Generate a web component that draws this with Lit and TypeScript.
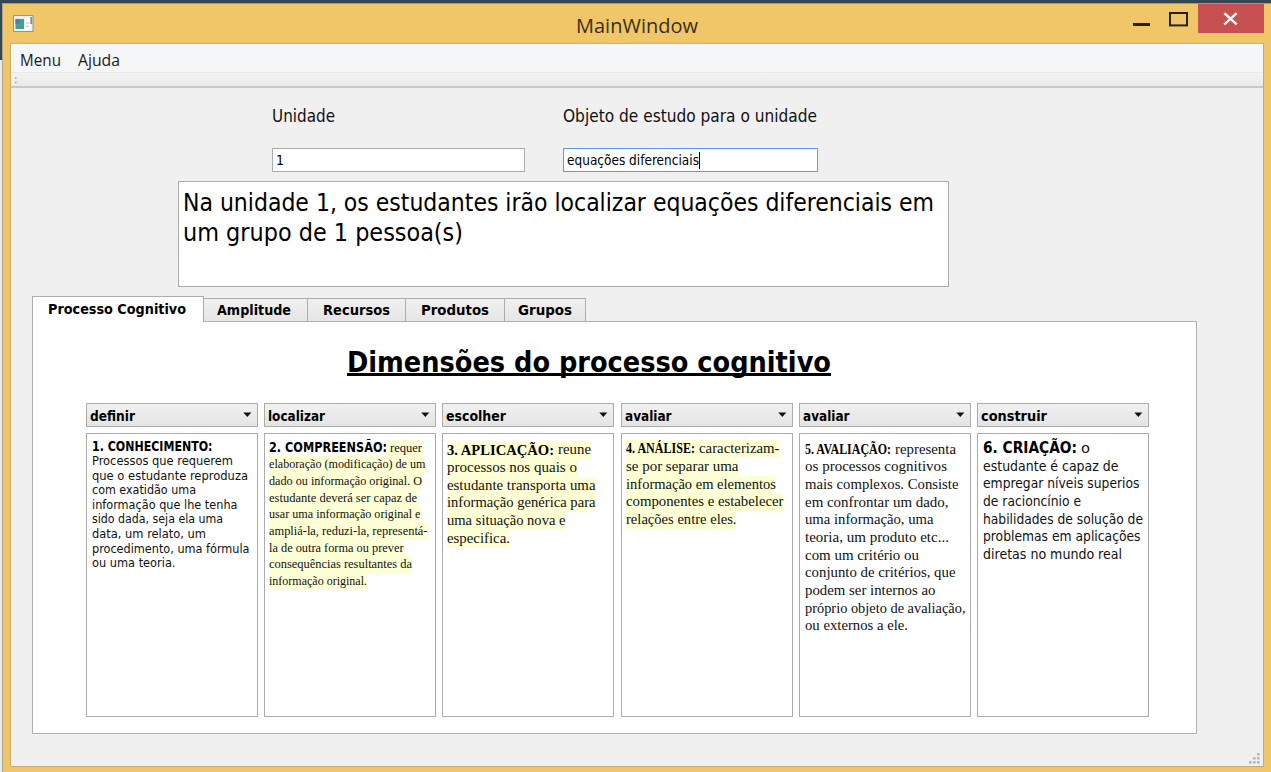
import { LitElement, html, css, svg } from "lit";
import { customElement, property, state } from "lit/decorators.js";
import { classMap } from "lit/directives/class-map.js";

type Run = { text: string; w: number; title?: boolean; plain?: boolean };
type Card = { kind: string; verb: string; lines: Run[][] };

const line = (text: string, w: number): Run[] => [{ text, w }];
const head = (text: string, w: number, plain = false): Run => ({ text, w, title: true, plain });

const CARDS: Card[] = [
  {
    kind: "c1", verb: "definir",
    lines: [
      [head("1. CONHECIMENTO:", 120.5)],
      line("Processos que requerem", 141),
      line("que o estudante reproduza", 156),
      line("com exatidão uma", 104),
      line("informação que lhe tenha", 145.5),
      line("sido dada, seja ela uma", 131),
      line("data, um relato, um", 114),
      line("procedimento, uma fórmula", 157.5),
      line("ou uma teoria.", 83.5),
    ],
  },
  {
    kind: "c2", verb: "localizar",
    lines: [
      [head("2. COMPREENSÃO:", 118, true), { text: "requer", w: 32 }],
      line("elaboração (modificação) de um", 156.5),
      line("dado ou informação original. O", 153),
      line("estudante deverá ser capaz de", 148),
      line("usar uma informação original e", 151.5),
      line("ampliá-la, reduzi-la, representá-", 158.5),
      line("la de outra forma ou prever", 134.5),
      line("consequências resultantes da", 143),
      line("informação original.", 98),
    ],
  },
  {
    kind: "c3", verb: "escolher",
    lines: [
      [head("3. APLICAÇÃO:", 107), { text: "reune", w: 33 }],
      line("processos nos quais o", 130),
      line("estudante transporta uma", 148.5),
      line("informação genérica para", 148.5),
      line("uma situação nova e", 118.5),
      line("especifica.", 63),
    ],
  },
  {
    kind: "c4", verb: "avaliar",
    lines: [
      [head("4. ANÁLISE:", 69), { text: "caracterizam-", w: 80.5 }],
      line("se por separar uma", 112.5),
      line("informação em elementos", 150),
      line("componentes e estabelecer", 157.5),
      line("relações entre eles.", 110.5),
    ],
  },
  {
    kind: "c5", verb: "avaliar",
    lines: [
      [head("5. AVALIAÇÃO:", 86), { text: "representa", w: 61 }],
      line("os processos cognitivos", 142),
      line("mais complexos. Consiste", 153.5),
      line("em confrontar um dado,", 143.5),
      line("uma informação, uma", 128.5),
      line("teoria, um produto etc...", 144),
      line("com um critério ou", 114),
      line("conjunto de critérios, que", 150.5),
      line("podem ser internos ao", 130.5),
      line("próprio objeto de avaliação,", 160.5),
      line("ou externos a ele.", 103),
    ],
  },
  {
    kind: "c6", verb: "construir",
    lines: [
      [head("6. CRIAÇÃO:", 94), { text: "o", w: 9 }],
      line("estudante é capaz de", 135.5),
      line("empregar níveis superios", 156.5),
      line("de racioncínio e", 98),
      line("habilidades de solução de", 160),
      line("problemas em aplicações", 157.5),
      line("diretas no mundo real", 139),
    ],
  },
];

const TABS = [
  { label: "Processo Cognitivo", tab: 172, w: 138 },
  { label: "Amplitude", tab: 103.5, w: 74 },
  { label: "Recursos", tab: 98, w: 67 },
  { label: "Produtos", tab: 99, w: 68 },
  { label: "Grupos", tab: 81.5, w: 54 },
];

/** One run of text, condensed or widened so that it spans exactly `w` pixels. */
@customElement("fit-text")
class FitText extends LitElement {
  @property({ type: Number }) w = 0;
  @property() text = "";
  @state() private stretch = 1;

  static styles = css`
    :host { display: inline-block; white-space: pre; }
    .run { display: inline-block; transform-origin: 0 50%; }
  `;

  firstUpdated() {
    const run = this.renderRoot.querySelector(".run") as HTMLElement;
    const natural = run.getBoundingClientRect().width;
    this.style.width = `${this.w}px`;
    this.stretch = this.w / natural;
  }

  render() {
    return html`<span class="run" style="transform:scaleX(${this.stretch})">${this.text}</span>`;
  }
}

@customElement("app-root")
class AppRoot extends LitElement {
  @state() private active = 0;

  static styles = css`
    :host {
      display: block;
      width: 1271px;
      height: 772px;
      overflow: hidden;
      color: #000;
      font-family: "DejaVu Sans Condensed", "DejaVu Sans", sans-serif;
      font-stretch: condensed;
    }
    * { box-sizing: border-box; }
    .desktop {
      height: 772px;
      padding: 3px 0 0 2px;
      background: linear-gradient(#334654 0 60px, #e9eaec 60px);
    }
    .window {
      height: 769px;
      background: #f0c669;
      border-top: 1px solid #b09a62;
      border-left: 1px solid #b5a67e;
      padding: 0 7px 5px 7px;
      display: flex;
      flex-direction: column;
    }
    .titlebar {
      height: 39px;
      flex: none;
      display: flex;
      align-items: flex-start;
      padding-left: 3px;
      font-family: "Open Sans", "Noto Sans", sans-serif;
      font-stretch: normal;
    }
    .app-icon { margin-top: 11px; display: block; }
    .title {
      flex: 1;
      padding: 7px 0 0 542px;
      font-size: 20.3px;
      line-height: 28px;
      color: #3a301a;
    }
    .controls { display: flex; }
    .client {
      flex: 1;
      display: flex;
      flex-direction: column;
      border: 1px solid #c3ab73;
      border-top-color: #cdb27a;
      background: #f0f0f0;
    }
    .menubar {
      height: 28px;
      flex: none;
      display: flex;
      gap: 17px;
      padding-left: 8px;
      background: #f5f6f8;
      border-left: 1px solid #fff;
      font-family: "Open Sans", "Noto Sans", sans-serif;
      font-stretch: normal;
      font-size: 16.4px;
      line-height: 31px;
      color: #1b1b1b;
    }
    .toolbar {
      height: 16px;
      flex: none;
      border-top: 1px solid #e9e9ea;
      border-bottom: 2px solid #c9c9c9;
      background: linear-gradient(#f2f2f3, #eaeaea);
      padding: 4px 0 0 4px;
    }
    .grip { display: block; }
    .body {
      flex: 1;
      padding: 16px 0 0 21px;
      display: flex;
      flex-direction: column;
    }
    .form {
      display: grid;
      grid-template-columns: 254px 255px;
      column-gap: 37.5px;
      row-gap: 21px;
      margin-left: 239.5px;
      font-size: 17px;
    }
    .label { line-height: 24px; height: 23px; color: #111; }
    .field {
      height: 24px;
      border: 1px solid #ababab;
      background: #fff;
      padding-left: 3px;
      font-size: 14.5px;
      line-height: 23px;
      display: flex;
    }
    .field.narrow { width: 253px; }
    .focus { border-color: #569de5; }
    .caret { width: 1px; height: 17px; margin-top: 3px; background: #000; }
    .summary {
      margin: 9px 0 0 146px;
      width: 771px;
      height: 106px;
      border: 1px solid #ababab;
      background: #fff;
      padding: 6px 0 0 4px;
      font-size: 25px;
      line-height: 30px;
    }
    .summary-line { height: 30px; }
    .tabs {
      display: flex;
      align-items: flex-end;
      margin-top: 9px;
      height: 26px;
      font-weight: bold;
      font-size: 14.8px;
    }
    .tab {
      height: 24px;
      border: 1px solid #acacac;
      border-left-width: 0;
      background: linear-gradient(#f0f0f0, #e5e5e5);
      display: flex;
      justify-content: center;
      line-height: 22px;
    }
    .tab.on {
      height: 26px;
      margin-bottom: 0;
      border-left-width: 1px;
      border-bottom: 0;
      background: #fff;
      line-height: 24px;
      padding-right: 3px;
      z-index: 1;
    }
    .tab:nth-child(2) { padding-right: 2px; }
    .panel {
      width: 1165px;
      height: 413px;
      margin-top: -1px;
      border: 1px solid #b0b0b0;
      background: #fff;
      padding: 22px 0 0 53px;
    }
    .heading {
      height: 34px;
      overflow: hidden;
      margin-left: 261px;
      font-size: 29px;
      font-weight: bold;
      line-height: 36px;
    }
    .heading-text {
      display: inline-block;
      height: 32px;
      line-height: 36px;
      border-bottom: 3px solid #000;
      overflow: visible;
    }
    .columns {
      display: grid;
      grid-template-columns: repeat(6, 172px);
      column-gap: 6.2px;
      margin-top: 25px;
    }
    .combo {
      height: 24px;
      border: 1px solid #acacac;
      background: linear-gradient(#f1f1f1, #e4e4e4);
      display: flex;
      justify-content: space-between;
      padding: 0 5px 0 3px;
      font-weight: bold;
      font-size: 14.8px;
      line-height: 23px;
    }
    .arrow { display: block; margin-top: 8px; }
    .card {
      height: 284px;
      margin-top: 6px;
      border: 1px solid #ababab;
      background: #fff;
      padding-left: 4px;
      color: #111;
    }
    .row { display: flex; width: fit-content; height: var(--pitch); line-height: var(--pitch); }
    .b { font-weight: bold; color: #000; }
    .serif { font-family: "Liberation Serif", serif; font-stretch: normal; }
    .sans { font-family: "DejaVu Sans Condensed", "DejaVu Sans", sans-serif; font-stretch: condensed; }
    .hl { background: #ffffd6; }

    .c1 { --pitch: 14.6px; font-size: 12px; padding-top: 5px; padding-left: 5px; }
    .c1 .row:first-child { height: 15px; line-height: 16px; }
    .c1 .b { font-size: 13.4px; }
    .c2 { --pitch: 16.7px; font-size: 13px; padding-top: 5.5px; }
    .c2 .b { font-size: 13.2px; }
    .c2 .b + .rest { padding-left: 3px; }
    .c3 { --pitch: 17.75px; font-size: 14.6px; padding-top: 7px; }
    .c3 .row:first-child, .c4 .row:first-child, .c5 .row:first-child, .c6 .row:first-child { column-gap: 4px; }
    .c3 .b { font-size: 15.6px; }
    .c4 { --pitch: 17.75px; font-size: 14.6px; padding-top: 6px; }
    .c4 .b { font-size: 13.6px; }
    .c5 { --pitch: 17.7px; font-size: 14.6px; padding-top: 6.5px; padding-left: 5px; }
    .c5 .b { font-size: 13.6px; }
    .c6 { --pitch: 17.7px; font-size: 14.5px; padding-top: 6px; padding-left: 5px; }
    .c6 .b { font-size: 15px; }
    .statusbar {
      flex: 1;
      display: flex;
      justify-content: flex-end;
      align-items: flex-end;
      padding: 0 3px 2px 0;
    }
  `;

  private renderCard(card: Card) {
    const serif = ["c2", "c3", "c4", "c5"].includes(card.kind);
    const marked = ["c2", "c3", "c4"].includes(card.kind);
    return html`
      <div class="column">
        <div class="combo">
          <span>${this.verb(card.verb)}</span>
          <svg class="arrow" width="9" height="6" viewBox="0 0 9 6"><path d="M0.3 0.5H8.3L4.3 5Z" fill="#111" /></svg>
        </div>
        <div class="card ${card.kind}">
          ${card.lines.map((runs) => {
            const split = runs.some((r) => r.plain);
            return html`<div class=${classMap({ row: true, serif, hl: marked && !split })}>
              ${runs.map((r) => html`<span class=${classMap({
                b: !!r.title,
                rest: !r.title,
                sans: !!r.plain,
                hl: marked && split && !r.title,
              })}><fit-text .w=${r.w} .text=${r.text}></fit-text></span>`)}
            </div>`;
          })}
        </div>
      </div>`;
  }

  private verb(v: string) {
    const widths: Record<string, number> = { definir: 45, localizar: 57, escolher: 60, avaliar: 46.5, construir: 66 };
    return html`<fit-text .w=${widths[v]} .text=${v}></fit-text>`;
  }

  render() {
    const dots = [[8, 0], [4, 4], [8, 4], [0, 8], [4, 8], [8, 8]];
    return html`
      <div class="desktop">
        <div class="window">
          <div class="titlebar">
            <svg class="app-icon" width="21" height="17" viewBox="0 0 21 17">
              <rect x="0.5" y="0.5" width="19.5" height="16" fill="#e9eef0" stroke="#98958c" />
              <rect x="2.5" y="4" width="8.5" height="10" fill="#4f9b94" />
              <rect x="2.5" y="4" width="4" height="5" fill="#3f8b9a" />
              <rect x="12" y="3" width="6" height="12" fill="#fbfbfb" />
              <path d="M13 8H17M13 11.5H16" stroke="#c3cdc8" />
              <rect x="17.4" y="2" width="1.8" height="7" fill="#7c8a90" />
            </svg>
            <div class="title"><fit-text .w=${122} .text=${"MainWindow"}></fit-text></div>
            <svg class="controls" width="140" height="31" viewBox="0 0 140 31">
              <rect x="9" y="19" width="17" height="3" fill="#2a220f" />
              <rect x="46" y="9" width="17" height="12.4" fill="none" stroke="#2a220f" stroke-width="2" />
              <rect x="74" y="0" width="66" height="29" fill="#c75050" />
              <path d="M100.3 9.2L112.7 20.4M112.7 9.2L100.3 20.4" stroke="#fff" stroke-width="2.4" />
            </svg>
          </div>
          <div class="client">
            <div class="menubar">
              <fit-text .w=${41} .text=${"Menu"}></fit-text>
              <fit-text .w=${42} .text=${"Ajuda"}></fit-text>
            </div>
            <div class="toolbar">
              <svg class="grip" width="3" height="7"><path d="M0 1H1.5M0 5.5H1.5" stroke="#a8a8a8" stroke-width="1.4" /></svg>
            </div>
            <div class="body">
              <div class="form">
                <div class="label"><fit-text .w=${63} .text=${"Unidade"}></fit-text></div>
                <div class="label"><fit-text .w=${254} .text=${"Objeto de estudo para o unidade"}></fit-text></div>
                <div class="field narrow"><fit-text .w=${8} .text=${"1"}></fit-text></div>
                <div class="field focus">
                  <fit-text .w=${132} .text=${"equações diferenciais"}></fit-text><span class="caret"></span>
                </div>
              </div>
              <div class="summary">
                <div class="summary-line"><fit-text .w=${751} .text=${"Na unidade 1, os estudantes irão localizar equações diferenciais em"}></fit-text></div>
                <div class="summary-line"><fit-text .w=${280} .text=${"um grupo de 1 pessoa(s)"}></fit-text></div>
              </div>
              <div class="tabs">
                ${TABS.map((t, i) => html`<div class=${classMap({ tab: true, on: i === this.active })} style="width:${t.tab}px"
                  ><fit-text .w=${t.w} .text=${t.label}></fit-text></div>`)}
              </div>
              <div class="panel">
                <div class="heading"><div class="heading-text"><fit-text .w=${484} .text=${"Dimensões do processo cognitivo"}></fit-text></div></div>
                <div class="columns">${CARDS.map((c) => this.renderCard(c))}</div>
              </div>
              <div class="statusbar">
                <svg width="11" height="11" viewBox="0 0 11 11">
                  ${dots.map(([x, y]) => svg`<rect x=${x} y=${y} width="2.6" height="2.6" fill="#b9b9be" />`)}
                </svg>
              </div>
            </div>
          </div>
        </div>
      </div>`;
  }
}
